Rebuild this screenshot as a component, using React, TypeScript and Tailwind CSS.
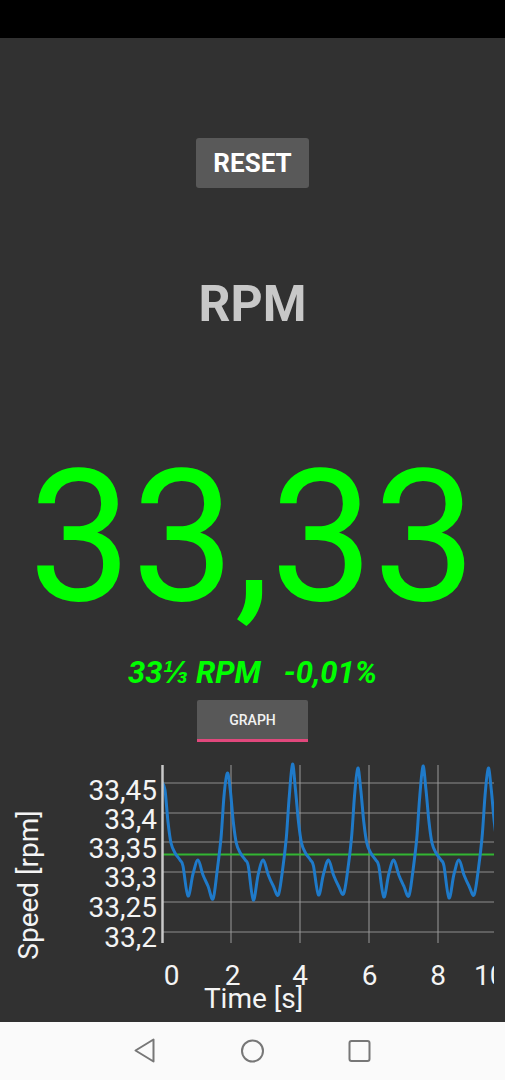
import React from "react";

type Pt = [number, number];

// one period of the wow curve, offsets from the peak (px) and screen y
const template: Pt[] = [
  [0, 765],
  [3, 790],
  [6, 822],
  [9, 843],
  [13, 853],
  [18, 860],
  [21, 866],
  [26, 896],
  [31, 874],
  [36, 860],
  [41, 875],
  [46, 886],
  [51, 895],
  [55, 872],
  [59, 838],
  [62, 796],
];

const peaks = [782, 773, 764, 768, 766, 768];
const dips: Pt[] = [
  [896, 899],
  [900, 895],
  [895, 894],
  [897, 896],
  [898, 895],
  [896, 897],
];

const buildPath = () => {
  const pts: Pt[] = [];
  for (let k = 0; k < peaks.length; k++) {
    const p = 162 + 65.25 * k;
    for (const [dx, y] of template) {
      const x = p + dx;
      if (x > 504) break;
      let yy = y;
      if (dx === 0) yy = peaks[k];
      if (dx === 26) yy = dips[k][0];
      if (dx === 51) yy = dips[k][1];
      pts.push([x, yy]);
    }
  }
  let d = `M ${pts[0][0]} ${pts[0][1]}`;
  for (let i = 0; i < pts.length - 1; i++) {
    const p0 = pts[i - 1] || pts[i];
    const p1 = pts[i];
    const p2 = pts[i + 1];
    const p3 = pts[i + 2] || p2;
    const c1x = p1[0] + (p2[0] - p0[0]) / 6;
    const c1y = p1[1] + (p2[1] - p0[1]) / 6;
    const c2x = p2[0] - (p3[0] - p1[0]) / 6;
    const c2y = p2[1] - (p3[1] - p1[1]) / 6;
    d += ` C ${c1x.toFixed(1)} ${c1y.toFixed(1)} ${c2x.toFixed(1)} ${c2y.toFixed(1)} ${p2[0].toFixed(1)} ${p2[1]}`;
  }
  return d;
};

const yTicks: { label: string; grid: number; base: number }[] = [
  { label: "33,45", grid: 783, base: 800 },
  { label: "33,4", grid: 813, base: 829 },
  { label: "33,35", grid: 842, base: 858 },
  { label: "33,3", grid: 872, base: 887 },
  { label: "33,25", grid: 902, base: 917 },
  { label: "33,2", grid: 932, base: 947 },
];

const xTicks: { label: string; grid: number; at: number }[] = [
  { label: "0", grid: 162, at: 171.5 },
  { label: "2", grid: 231, at: 232.5 },
  { label: "4", grid: 300, at: 300 },
  { label: "6", grid: 369, at: 369.5 },
  { label: "8", grid: 438, at: 438 },
];

function SpeedChart() {
  const font = { fontFamily: "Roboto, sans-serif" };
  return (
    <svg width="505" height="280" viewBox="0 742 505 280" className="block">
      <defs>
        <clipPath id="plot">
          <rect x="162" y="755" width="332" height="192" />
        </clipPath>
        <clipPath id="view">
          <rect x="0" y="742" width="494" height="280" />
        </clipPath>
      </defs>

      {/* grid */}
      {yTicks.map((t) => (
        <line key={t.label} x1="162" x2="494" y1={t.grid} y2={t.grid} stroke="#8e8e8e" strokeWidth="1" />
      ))}
      {xTicks.slice(1).map((t) => (
        <line key={t.label} x1={t.grid} x2={t.grid} y1="765" y2="943" stroke="#9a9a9a" strokeWidth="1" />
      ))}

      {/* target speed */}
      <line x1="162" x2="494" y1="854.5" y2="854.5" stroke="#33b533" strokeWidth="2" />

      <path
        d={buildPath()}
        clipPath="url(#plot)"
        fill="none"
        stroke="#1f7ac9"
        strokeWidth="3"
        strokeLinejoin="round"
        strokeLinecap="round"
      />

      {/* y axis */}
      <line x1="162.5" x2="162.5" y1="765" y2="943" stroke="#c9c9c9" strokeWidth="2.5" />

      <g fill="#f4f4f4" fontSize="28" style={font}>
        {yTicks.map((t) => (
          <text key={t.label} x="157" y={t.base} textAnchor="end">
            {t.label}
          </text>
        ))}
        {xTicks.map((t) => (
          <text key={t.label} x={t.at} y="985" textAnchor="middle">
            {t.label}
          </text>
        ))}
        <g clipPath="url(#view)">
          <text x="474" y="985">
            10
          </text>
        </g>
        <text x="253.5" y="1008" textAnchor="middle">
          Time [s]
        </text>
        <text transform="translate(38 885) rotate(-90)" textAnchor="middle">
          Speed [rpm]
        </text>
      </g>
    </svg>
  );
}

export default function App() {
  return (
    <div className="flex h-[1080px] w-full flex-col font-['Roboto',sans-serif]">
      <div className="h-[38px] bg-black" />

      <main className="flex h-[984px] flex-col items-center bg-[#313131]">
        <button className="mt-[100px] flex h-[50px] w-[113px] items-center justify-center rounded-[3px] bg-[#595959] text-[26px] font-bold leading-none text-white">
          RESET
        </button>

        <h1 className="mt-[91px] text-[50px] font-bold leading-none text-[#c8c8c8]">RPM</h1>

        <div className="mt-[117px] text-[183px] leading-none text-[#00ff00]">33,33</div>

        <p className="mt-[28px] whitespace-pre text-[31px] font-bold italic leading-none text-[#00ff00]">
          {"33⅓ RPM   -0,01%"}
        </p>

        <button className="mt-[12px] flex h-[42px] w-[111px] items-center justify-center rounded-t-[2px] border-b-[3px] border-[#e1487c] bg-[#585858] text-[14px] font-medium leading-none text-[#f2f2f2]">
          GRAPH
        </button>

        <SpeedChart />
      </main>

      <nav className="flex h-[58px] items-center justify-center bg-[#fafafa]">
        <svg width="505" height="58" viewBox="0 1022 505 58">
          <g fill="none" stroke="#777777" strokeWidth="2" strokeLinejoin="round">
            <path d="M135.5 1050.5 L153.5 1039.5 L153.5 1061.5 Z" />
            <circle cx="252.5" cy="1051" r="10.5" />
            <rect x="349.5" y="1041" width="20" height="20" rx="2" />
          </g>
        </svg>
      </nav>
    </div>
  );
}
